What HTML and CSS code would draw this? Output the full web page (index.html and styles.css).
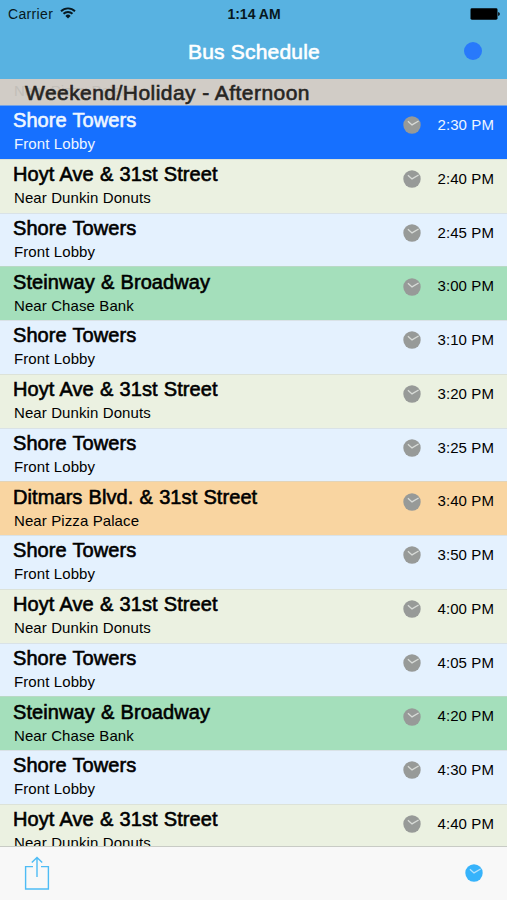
FILE: index.html
```
<!DOCTYPE html>
<html lang="en">
<head>
    <meta charset="UTF-8">
    <meta name="viewport" content="width=device-width, initial-scale=1.0">
    <title>Bus Schedule</title>
    <link rel="stylesheet" href="styles.css">
</head>
<body>
    <!-- Shared clock icon -->
    <svg class="sprite" width="0" height="0">
        <symbol id="clock" viewBox="0 0 18 18">
            <circle cx="9" cy="9" r="8.7" fill="currentColor" stroke="none"/>
            <path d="M4.9 5.2 L9 8.9 L15.6 5" fill="none" stroke-width="1.3"/>
        </symbol>
    </svg>

    <header class="top-bar">
        <div class="status-bar">
            <div class="carrier">
                <span>Carrier</span>
                <svg width="16" height="12" viewBox="0 0 16 12" fill="none" stroke="#071820" stroke-width="1.9">
                    <path d="M1 4.2 A10 10 0 0 1 15 4.2"/>
                    <path d="M3.5 6.8 A6.4 6.4 0 0 1 12.5 6.8"/>
                    <path d="M8 11.6 L5.4 8.9 A3.7 3.7 0 0 1 10.6 8.9 Z" fill="#071820" stroke="none"/>
                </svg>
            </div>
            <div class="clock-time">1:14 AM</div>
            <svg class="battery" width="30" height="12" viewBox="0 0 30 12">
                <rect x="0.5" y="0.3" width="27" height="11.4" rx="1.4"/>
                <path d="M28.2 4.1 Q29.8 4.6 29.8 6 T28.2 7.9 Z"/>
            </svg>
        </div>
        <div class="nav-bar">
            <h1>Bus Schedule</h1>
            <span class="dot"></span>
        </div>
    </header>

    <div class="section-header">
        <span class="ghost">Near Pizza Palace</span>
        <h2>Weekend/Holiday - Afternoon</h2>
    </div>

    <main class="schedule">
        <div class="row selected">
            <div class="stop"><h3>Shore Towers</h3><p>Front Lobby</p></div>
            <svg class="icon"><use href="#clock"/></svg><time>2:30 PM</time>
        </div>
        <div class="row hoyt">
            <div class="stop"><h3>Hoyt Ave &amp; 31st Street</h3><p>Near Dunkin Donuts</p></div>
            <svg class="icon"><use href="#clock"/></svg><time>2:40 PM</time>
        </div>
        <div class="row shore">
            <div class="stop"><h3>Shore Towers</h3><p>Front Lobby</p></div>
            <svg class="icon"><use href="#clock"/></svg><time>2:45 PM</time>
        </div>
        <div class="row steinway">
            <div class="stop"><h3>Steinway &amp; Broadway</h3><p>Near Chase Bank</p></div>
            <svg class="icon"><use href="#clock"/></svg><time>3:00 PM</time>
        </div>
        <div class="row shore">
            <div class="stop"><h3>Shore Towers</h3><p>Front Lobby</p></div>
            <svg class="icon"><use href="#clock"/></svg><time>3:10 PM</time>
        </div>
        <div class="row hoyt">
            <div class="stop"><h3>Hoyt Ave &amp; 31st Street</h3><p>Near Dunkin Donuts</p></div>
            <svg class="icon"><use href="#clock"/></svg><time>3:20 PM</time>
        </div>
        <div class="row shore">
            <div class="stop"><h3>Shore Towers</h3><p>Front Lobby</p></div>
            <svg class="icon"><use href="#clock"/></svg><time>3:25 PM</time>
        </div>
        <div class="row ditmars">
            <div class="stop"><h3>Ditmars Blvd. &amp; 31st Street</h3><p>Near Pizza Palace</p></div>
            <svg class="icon"><use href="#clock"/></svg><time>3:40 PM</time>
        </div>
        <div class="row shore">
            <div class="stop"><h3>Shore Towers</h3><p>Front Lobby</p></div>
            <svg class="icon"><use href="#clock"/></svg><time>3:50 PM</time>
        </div>
        <div class="row hoyt">
            <div class="stop"><h3>Hoyt Ave &amp; 31st Street</h3><p>Near Dunkin Donuts</p></div>
            <svg class="icon"><use href="#clock"/></svg><time>4:00 PM</time>
        </div>
        <div class="row shore">
            <div class="stop"><h3>Shore Towers</h3><p>Front Lobby</p></div>
            <svg class="icon"><use href="#clock"/></svg><time>4:05 PM</time>
        </div>
        <div class="row steinway">
            <div class="stop"><h3>Steinway &amp; Broadway</h3><p>Near Chase Bank</p></div>
            <svg class="icon"><use href="#clock"/></svg><time>4:20 PM</time>
        </div>
        <div class="row shore">
            <div class="stop"><h3>Shore Towers</h3><p>Front Lobby</p></div>
            <svg class="icon"><use href="#clock"/></svg><time>4:30 PM</time>
        </div>
        <div class="row hoyt">
            <div class="stop"><h3>Hoyt Ave &amp; 31st Street</h3><p>Near Dunkin Donuts</p></div>
            <svg class="icon"><use href="#clock"/></svg><time>4:40 PM</time>
        </div>
    </main>

    <footer class="toolbar">
        <svg width="26" height="34" viewBox="0 0 26 34" fill="none" stroke="#4ebcf5" stroke-width="1.4">
            <path d="M9 10.6 H1.6 V33 H24.4 V10.6 H17"/>
            <path d="M13 1.5 V21 M7.8 6.6 L13 1.4 L18.2 6.6"/>
        </svg>
        <svg class="icon"><use href="#clock"/></svg>
    </footer>
</body>
</html>
```
FILE: styles.css
```
:root {
    --bar-color: #58b2e1;
    --tint-color: #37b3fb;
}

* {
    margin: 0;
    padding: 0;
    box-sizing: border-box;
}

body {
    font-family: "Liberation Sans", Arial, Helvetica, sans-serif;
    height: 900px;
    display: flex;
    flex-direction: column;
    overflow: hidden;
    color: #000;
}

.sprite {
    position: absolute;
}

/* medium weight look */
h1, h2, h3 {
    font-weight: 400;
    -webkit-text-stroke: 0.6px currentColor;
    white-space: nowrap;
}

.top-bar {
    height: 79px;
    flex: none;
    background: var(--bar-color);
}

.status-bar {
    height: 28px;
    padding: 0 7px 0 8px;
    display: grid;
    grid-template-columns: 1fr auto 1fr;
    align-items: center;
    font-size: 14px;
    color: #071820;
}

.carrier {
    display: flex;
    align-items: center;
    gap: 7px;
    letter-spacing: 0.35px;
}

.carrier svg {
    margin-top: -3px;
}

.clock-time {
    font-weight: 700;
    font-size: 14px;
}

.battery {
    justify-self: end;
    margin-top: -1px;
}

.nav-bar {
    height: 51px;
    padding: 0 24px 0 25px;
    display: grid;
    grid-template-columns: 19px 1fr 19px;
    align-items: center;
    color: #fff;
}

.nav-bar h1 {
    grid-column: 2;
    font-size: 21px;
    line-height: 48px;
    margin-top: -3px;
    letter-spacing: 0.2px;
    text-align: center;
}

.dot {
    width: 18px;
    height: 18px;
    margin-top: -6px;
    border-radius: 50%;
    background: #2879fb;
}

.section-header {
    position: relative;
    height: 26px;
    flex: none;
    padding-left: 25px;
    background: #d1ccc6;
    overflow: hidden;
    color: #262422;
}

.section-header h2 {
    position: relative;
    font-size: 21px;
    line-height: 28px;
    letter-spacing: 0.45px;
}

/* row text scrolled under the translucent header */
.ghost {
    position: absolute;
    left: 14px;
    top: 3px;
    font-size: 15px;
    color: #c2beb8;
}

.schedule {
    flex: 1;
    min-height: 0;
    overflow: hidden;
}

.row {
    height: 53.75px;
    padding: 0 13px;
    display: flex;
    align-items: flex-start;
    border-top: 1px solid rgba(205, 212, 208, 0.5);
}

.stop {
    flex: 1;
}

.stop h3 {
    font-size: 20px;
    line-height: 24px;
    margin-top: 2.4px;
    letter-spacing: 0.08px;
    word-spacing: 0.5px;
}

.stop p {
    font-size: 15px;
    line-height: 18px;
    margin-top: 3px;
    padding-left: 1px;
    letter-spacing: 0.1px;
}

.row time {
    width: 73.5px;
    font-size: 15px;
    line-height: 18px;
    margin-top: 10px;
    letter-spacing: 0.1px;
    text-align: right;
}

.icon {
    width: 18px;
    height: 18px;
    color: #979a98;
    stroke: #d8dbd8;
}

.row .icon {
    margin-top: 10.3px;
}

.shore { background: #e4f1fe; }
.hoyt { background: #ebf1e1; }
.steinway { background: #a4dfbb; }
.ditmars { background: #f9d5a1; }

.selected {
    background: #1670ff;
    color: #eef6ff;
}

.toolbar {
    height: 54px;
    flex: none;
    padding: 0 24px 2px;
    display: flex;
    justify-content: space-between;
    align-items: center;
    background: #f8f8f8;
    border-top: 1px solid #c8cbc5;
}

.toolbar .icon {
    color: var(--tint-color);
    stroke: #b5e1fb;
}
```
